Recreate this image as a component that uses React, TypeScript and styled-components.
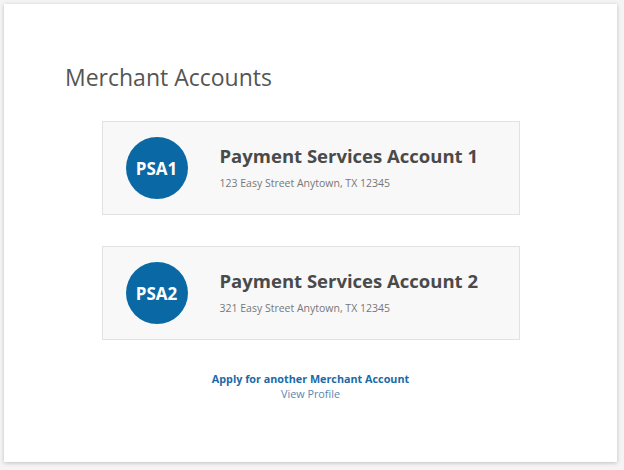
import styled, { createGlobalStyle } from 'styled-components';

const GlobalStyle = createGlobalStyle`
  html, body {
    margin: 0;
    padding: 0;
    background: #f4f4f4;
    font-family: "Open Sans", "Liberation Sans", sans-serif;
  }
`;

interface Account {
  code: string;
  name: string;
  address: string;
}

const accounts: Account[] = [
  { code: 'PSA1', name: 'Payment Services Account 1', address: '123 Easy Street Anytown, TX 12345' },
  { code: 'PSA2', name: 'Payment Services Account 2', address: '321 Easy Street Anytown, TX 12345' },
];

export default function App() {
  return (
    <>
      <GlobalStyle />
      <Page>
        <Panel>
          <Heading>Merchant Accounts</Heading>
          <AccountList>
            {accounts.map((a) => (
              <AccountCard key={a.code}>
                <Badge>{a.code}</Badge>
                <AccountInfo>
                  <AccountName>{a.name}</AccountName>
                  <AccountAddress>{a.address}</AccountAddress>
                </AccountInfo>
              </AccountCard>
            ))}
          </AccountList>
          <Links>
            <ApplyLink href="#">Apply for another Merchant Account</ApplyLink>
            <ProfileLink href="#">View Profile</ProfileLink>
          </Links>
        </Panel>
      </Page>
    </>
  );
}

const Page = styled.div`
  padding: 4px 7px 8px 4px;
`;

const Panel = styled.div`
  width: 613px;
  height: 458px;
  box-sizing: border-box;
  background: #ffffff;
  box-shadow: 0 1px 4px rgba(0, 0, 0, 0.22);
  padding: 58px 0 0 0;
`;

const Heading = styled.h1`
  margin: 0 0 0 61px;
  font-size: 23px;
  font-weight: 400;
  line-height: 30px;
  color: #555555;
`;

const AccountList = styled.div`
  width: 418px;
  margin: 29px auto 0 auto;
  display: flex;
  flex-direction: column;
  gap: 31px;
`;

const AccountCard = styled.div`
  height: 94px;
  box-sizing: border-box;
  display: flex;
  align-items: center;
  gap: 32px;
  padding: 0 0 0 23px;
  background: #f8f8f8;
  border: 1px solid #e2e2e2;
`;

const Badge = styled.div`
  width: 62px;
  height: 62px;
  border-radius: 50%;
  background: #0a69a5;
  color: #ffffff;
  display: flex;
  align-items: center;
  justify-content: center;
  font-size: 17px;
  font-weight: 700;
  flex-shrink: 0;
`;

const AccountInfo = styled.div`
  display: flex;
  flex-direction: column;
  gap: 8px;
  margin-top: -2px;
`;

const AccountName = styled.div`
  font-size: 18.5px;
  font-weight: 700;
  color: #4a4a4a;
  line-height: 24px;
`;

const AccountAddress = styled.div`
  font-size: 10.5px;
  color: #777777;
  line-height: 14px;
`;

const Links = styled.div`
  display: flex;
  flex-direction: column;
  align-items: center;
  margin-top: 31px;
`;

const ApplyLink = styled.a`
  font-size: 10.8px;
  font-weight: 700;
  color: #1b6aa6;
  text-decoration: none;
  line-height: 15px;
`;

const ProfileLink = styled.a`
  font-size: 10.8px;
  color: #5a86b3;
  text-decoration: none;
  line-height: 15px;
`;
